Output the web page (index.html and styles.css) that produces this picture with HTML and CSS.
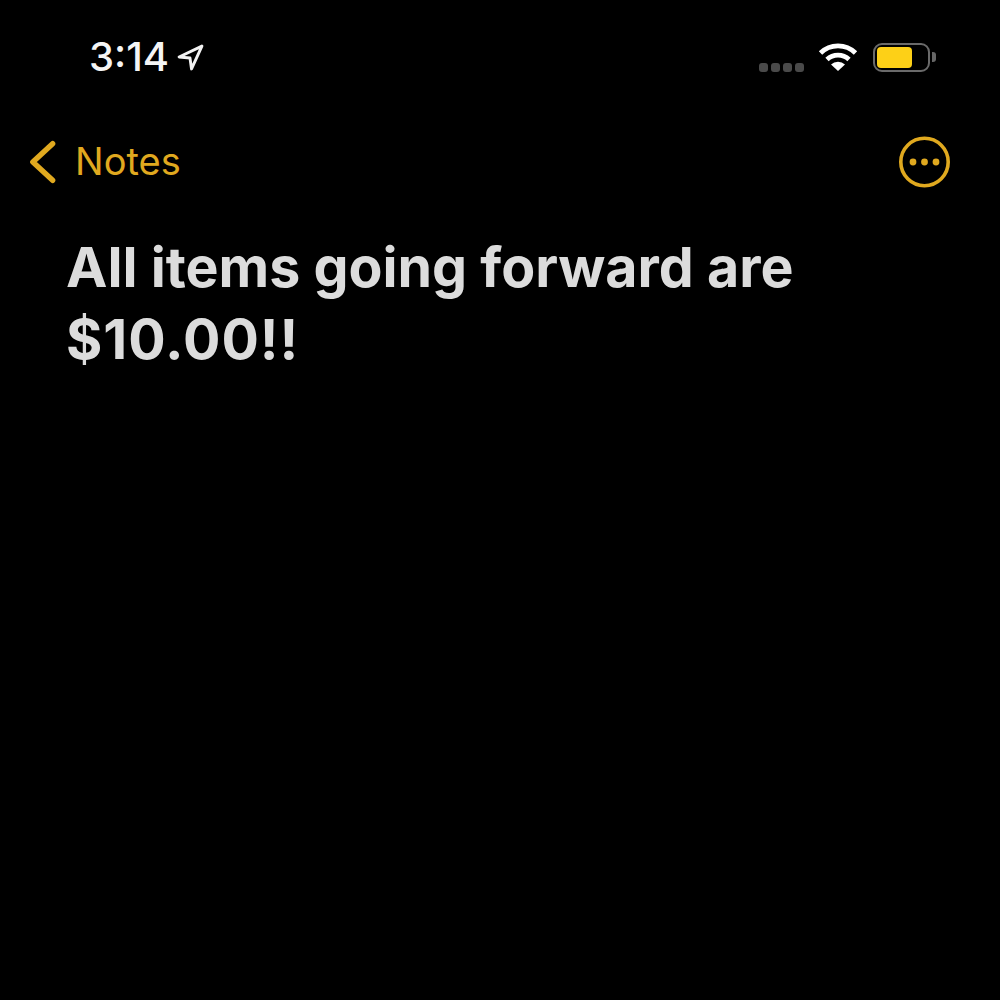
FILE: index.html
```html
<!DOCTYPE html>
<html lang="en">
<head>
<meta charset="utf-8">
<title>Notes</title>
<link rel="stylesheet" href="styles.css">
</head>
<body>
<div class="screen">
  <header class="status">
    <div class="status-left">
      <span class="time">3:14</span>
      <svg class="loc" viewBox="0 0 26 26"><path d="M24 2 L2 12.500 L12.500 13.500 L14 24 Z" fill="none" stroke="#f2f2f2" stroke-width="2.800" stroke-linejoin="round"/></svg>
    </div>
    <div class="status-right">
      <div class="signal"><i></i><i></i><i></i><i></i></div>
      <svg class="wifi" viewBox="0 0 40 28"><path d="M2.500 10 A25 25 0 0 1 37.500 10" fill="none" stroke="#fff" stroke-width="4.800"/><path d="M9 16.500 A16 16 0 0 1 31 16.500" fill="none" stroke="#fff" stroke-width="4.800"/><path d="M13 21.500 A10 10 0 0 1 27 21.500 L20 28 Z" fill="#fff"/></svg>
      <div class="battery"><div class="cell"><div class="charge"></div></div><div class="nub"></div></div>
    </div>
  </header>
  <nav class="nav">
    <div class="back">
      <svg class="chev" viewBox="0 0 28 44"><path d="M24.500 3 L4 22 L24.500 41" fill="none" stroke="#e0a91f" stroke-width="5.600" stroke-linecap="round" stroke-linejoin="round"/></svg>
      <span class="back-label">Notes</span>
    </div>
    <svg class="more" viewBox="0 0 52 52"><circle cx="26.500" cy="26" r="23.700" fill="none" stroke="#e0a91f" stroke-width="3.600"/><circle cx="15" cy="26" r="3.400" fill="#e0a91f"/><circle cx="26.500" cy="26" r="3.400" fill="#e0a91f"/><circle cx="38" cy="26" r="3.400" fill="#e0a91f"/></svg>
  </nav>
  <main class="note">
    <h1 class="title">All items going forward are<br><span class="price">$10.00!!</span></h1>
  </main>
</div>
</body>
</html>
```

FILE: styles.css
```css
html, body { margin: 0; padding: 0; background: #000; }
.screen {
  width: 1000px; height: 1000px; background: #000; overflow: hidden;
  font-family: Inter, "Liberation Sans", sans-serif;
}
.status {
  display: flex; justify-content: space-between; align-items: center;
  height: 56px; padding: 29px 64px 0 89px; box-sizing: content-box;
}
.status-left { display: flex; align-items: center; gap: 8px; }
.time { font-size: 40px; font-weight: 500; color: #f5f5f5; line-height: 56px; }
.loc { width: 27px; height: 27px; }
.status-right { display: flex; align-items: center; }
.signal { display: flex; gap: 3px; margin-right: 14px; margin-top: 20px; }
.signal i { display: block; width: 9px; height: 9px; border-radius: 3px; background: #4a4a4a; }
.wifi { width: 40px; height: 28px; margin-right: 15px; }
.battery { display: flex; align-items: center; }
.cell {
  width: 49px; height: 21px; padding: 2px; border: 2px solid #6a6a6a; border-radius: 9px;
  display: flex; box-sizing: content-box;
}
.charge { width: 35px; height: 21px; background: #fdd017; border-radius: 4px; }
.nub { width: 4px; height: 10px; background: #666; border-radius: 0 3px 3px 0; margin-left: 2px; }
.nav {
  display: flex; justify-content: space-between; align-items: center;
  height: 52px; padding: 51px 50px 0 29px; box-sizing: content-box;
}
.back { display: flex; align-items: center; gap: 19px; }
.chev { width: 27px; height: 44px; }
.back-label { font-size: 38px; font-weight: 400; color: #e0a91f; line-height: 44px; margin-bottom: 2px; }
.more { width: 52px; height: 52px; }
.note { padding: 43px 0 0 66px; }
.title {
  margin: 0; font-size: 55.500px; font-weight: 700; line-height: 72px; color: #dcdcdc;
}
.price { letter-spacing: 1px; }
```
